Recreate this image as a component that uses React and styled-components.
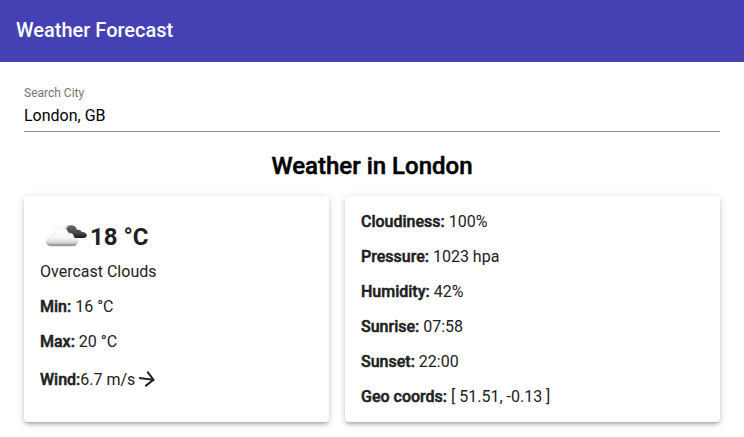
import React, { useState } from "react";
import styled, { createGlobalStyle } from "styled-components";

const GlobalStyle = createGlobalStyle`
  *, *::before, *::after { box-sizing: border-box; }
  body {
    margin: 0;
    background: #fff;
    color: #000;
    font-family: Roboto, "Liberation Sans", sans-serif;
    font-size: 16px;
    line-height: 19px;
  }
`;

const AppBar = styled.header`
  display: flex;
  align-items: center;
  padding: 14px 16px 16px;
  background: #4640b5;
  color: #fff;
`;

const AppTitle = styled.h1`
  margin: 0;
  font-size: 20px;
  font-weight: 500;
  line-height: 32px;
`;

const Main = styled.main`
  padding: 24px;
`;

const Field = styled.div`
  display: flex;
  flex-direction: column;
  border-bottom: 1px solid #8c8c8c;
`;

const FieldLabel = styled.label`
  color: #757575;
  font-size: 12px;
  line-height: 14px;
`;

const FieldInput = styled.input`
  width: 100%;
  height: 31px;
  padding: 0;
  border: 0;
  outline: 0;
  background: none;
  color: #000;
  font: inherit;
`;

const Heading = styled.h2`
  margin: 20px 0 16px;
  font-size: 24px;
  font-weight: 500;
  line-height: 28px;
  text-align: center;
  -webkit-text-stroke: 0.5px;
`;

const Cards = styled.div`
  display: grid;
  grid-template-columns: 305fr 375fr;
  gap: 16px;
`;

const Card = styled.section`
  display: flex;
  flex-direction: column;
  gap: 16px;
  padding: 16px;
  border-radius: 4px;
  background: #fff;
  color: #212121;
  box-shadow: 0 3px 3px -2px rgba(0, 0, 0, 0.2), 0 3px 4px 0 rgba(0, 0, 0, 0.14),
    0 1px 8px 0 rgba(0, 0, 0, 0.12);
`;

const Summary = styled.div`
  display: flex;
  flex-direction: column;
`;

const Temperature = styled.h2`
  display: flex;
  align-items: center;
  margin: 0;
  font-size: 24px;
  font-weight: 700;
  line-height: 28px;
`;

const Row = styled.p`
  display: ${(p) => (p.$inline ? "flex" : "block")};
  align-items: center;
  margin: 0;
`;

const Term = styled.strong`
  font-weight: 500;
  -webkit-text-stroke: 0.5px;
`;

function CloudIcon() {
  return (
    <svg width="50" height="50" viewBox="0 0 50 50" aria-hidden="true">
      <defs>
        <linearGradient id="light" x1="0" y1="0" x2="0" y2="1">
          <stop offset="0" stopColor="#fff" />
          <stop offset="0.6" stopColor="#f6f6f6" />
          <stop offset="0.85" stopColor="#d4d4d4" />
          <stop offset="1" stopColor="#888" />
        </linearGradient>
        <linearGradient id="dark" x1="0" y1="0" x2="0" y2="1">
          <stop offset="0" stopColor="#666" />
          <stop offset="0.65" stopColor="#444" />
          <stop offset="1" stopColor="#161616" />
        </linearGradient>
      </defs>
      <path
        d="M26 18c1-4.500 6-6 9-3.500 1.500 1.200 1.800 2.600 1.800 3.500 2.500-.8 4.600.4 5 2 3 0 5 1.300 5 3.200 0 1.700-1.500 2.800-3.500 2.800H34z"
        fill="url(#dark)"
      />
      <path d="M24.500 18.500c.8-4.500 5-6 8-4.200" fill="none" stroke="#999" />
      <path
        d="M10.500 33.500c-3 0-4.500-1.400-4.500-3.600 0-2.400 1.800-3.900 4.300-4.100-.5-2.600 1.500-4.200 4-3.600.4-4.400 3.500-7 7-7 3.800 0 6.400 2.700 6.800 6.300 4-1 6 1.400 5.600 4.100 2.500.3 4.300 1.800 4.300 3.900 0 2.400-1.800 4-4.300 4z"
        fill="url(#light)"
        stroke="#ddd"
        strokeWidth="0.5"
      />
      <path d="M8.500 33c1 .6 2 .7 3 .7h21c1.500 0 2.500-.2 3.300-.7" fill="none" stroke="#888" />
    </svg>
  );
}

const WindArrow = styled.svg`
  transform: rotate(${(p) => p.$degrees}deg);
`;

const details = [
  ["Cloudiness:", "100%"],
  ["Pressure:", "1023 hpa"],
  ["Humidity:", "42%"],
  ["Sunrise:", "07:58"],
  ["Sunset:", "22:00"],
  ["Geo coords:", "[ 51.51, -0.13 ]"],
];

export default function App() {
  const [city, setCity] = useState("London, GB");
  return (
    <>
      <GlobalStyle />
      <AppBar>
        <AppTitle>Weather Forecast</AppTitle>
      </AppBar>
      <Main>
        <Field>
          <FieldLabel htmlFor="city">Search City</FieldLabel>
          <FieldInput id="city" value={city} onChange={(e) => setCity(e.target.value)} />
        </Field>
        <Heading>Weather in London</Heading>
        <Cards>
          <Card>
            <Summary>
              <Temperature>
                <CloudIcon />
                18 °C
              </Temperature>
              <Row>Overcast Clouds</Row>
            </Summary>
            <Row>
              <Term>Min:</Term> 16 °C
            </Row>
            <Row>
              <Term>Max:</Term> 20 °C
            </Row>
            <Row $inline>
              <Term>Wind:</Term>6.7 m/s
              <WindArrow $degrees={8} width="24" height="24" viewBox="0 0 24 24" aria-hidden="true">
                <path fill="currentColor" d="M12 4l-1.410 1.410L16.170 11H4v2h12.170l-5.580 5.590L12 20l8-8z" />
              </WindArrow>
            </Row>
          </Card>
          <Card>
            {details.map(([term, value]) => (
              <Row key={term}>
                <Term>{term}</Term> {value}
              </Row>
            ))}
          </Card>
        </Cards>
      </Main>
    </>
  );
}
